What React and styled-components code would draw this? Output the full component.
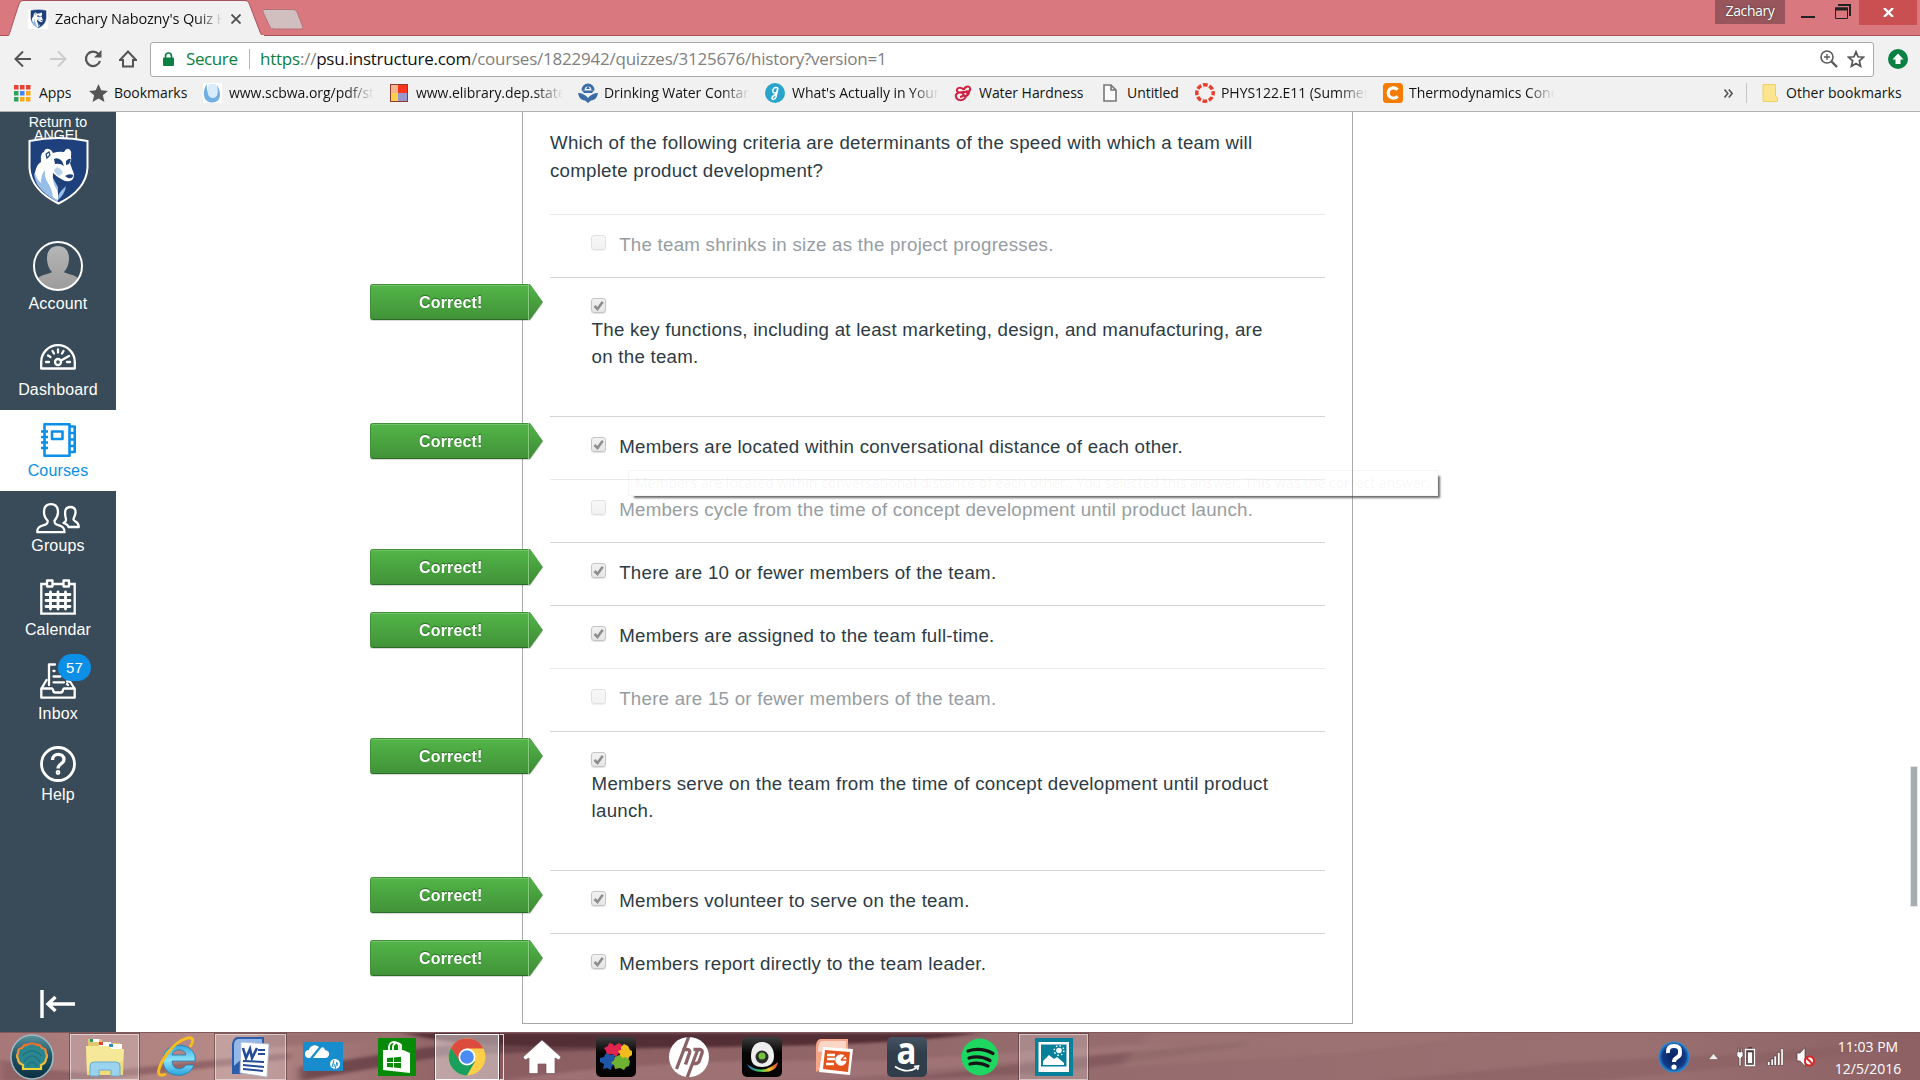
import React from "react";
import styled, { createGlobalStyle } from "styled-components";

const Global = createGlobalStyle`
  * { box-sizing: border-box; }
  html, body { margin: 0; padding: 0; overflow: hidden; background: #fff; }
  svg { display: block; flex: none; }
`;

const ui = `"Open Sans", "Noto Sans", sans-serif`;
const body = `"Liberation Sans", Arial, sans-serif`;

const Screen = styled.div`
  width: 1920px;
  height: 1080px;
  display: flex;
  flex-direction: column;
  overflow: hidden;
  font-family: ${body};
`;

/* ---------- title bar ---------- */
const TitleBar = styled.header`
  height: 36px;
  flex: none;
  display: flex;
  align-items: flex-start;
  background: #d9797f;
  box-shadow: inset 0 -1px 0 #a5525a;
`;
const Tab = styled.div`
  width: 256px;
  height: 36px;
  margin-left: 8px;
  position: relative;
  display: flex;
  align-items: center;
  padding: 1px 0 0 20px;
`;
const TabShape = styled.svg`
  position: absolute;
  left: 0;
  top: 0;
`;
const Favicon = styled.div`
  position: relative;
  width: 20px;
  height: 20px;
  background: #fff;
  display: flex;
  justify-content: center;
`;
const TabTitle = styled.div`
  position: relative;
  width: 168px;
  margin-left: 7px;
  font: 14.5px/22px ${ui};
  letter-spacing: -0.15px;
  white-space: nowrap;
  overflow: hidden;
  color: #111;
  mask-image: linear-gradient(90deg, #000 142px, transparent 168px);
`;
const TabClose = styled.svg`
  position: relative;
  margin-left: 8px;
`;
const NewTab = styled.svg`
  margin: 9px 0 0 -2px;
`;
const Spacer = styled.div`
  flex: 1;
`;
const Profile = styled.div`
  width: 70px;
  height: 24px;
  background: #98555b;
  color: #fff;
  font: 14px/22px ${ui};
  letter-spacing: -0.4px;
  text-align: center;
  text-shadow: 0 0 2px #333;
`;
const WinButtons = styled.div`
  display: flex;
  align-items: flex-start;
  padding: 3px 0 0 16px;
  gap: 20px;
`;
const CloseButton = styled.div`
  width: 58px;
  height: 25px;
  margin: -3px 3px 0 -12px;
  background: #c94f50;
  display: flex;
  align-items: center;
  justify-content: center;
`;

/* ---------- toolbar ---------- */
const Toolbar = styled.div`
  height: 45px;
  flex: none;
  display: flex;
  align-items: center;
  background: #f1f1f1;
  padding: 1px 12px 0 14px;
`;
const NavIcons = styled.div`
  width: 136px;
  display: flex;
  gap: 17px;
`;
const Omnibox = styled.div`
  flex: 1;
  height: 35px;
  display: flex;
  align-items: center;
  background: #fff;
  border: 1px solid #a9a9a9;
  border-radius: 3px;
  padding: 0 8px 0 12px;
  font: 17px/30px ${ui};
  letter-spacing: -0.23px;
`;
const Secure = styled.span`
  color: #0b8043;
  margin-left: 12px;
  width: 52px;
  letter-spacing: -0.4px;
`;
const Divider = styled.span`
  width: 1px;
  height: 20px;
  background: #b5b5b5;
  margin: 0 10px 0 11px;
`;
const Url = styled.span`
  flex: 1;
  color: #808080;
  white-space: nowrap;
  b { font-weight: 400; color: #111; }
  i { font-style: normal; color: #0b8043; }
`;
const OmniIcons = styled.div`
  display: flex;
  gap: 9px;
`;
const Update = styled.div`
  margin: 0 0 0 14px;
`;

/* ---------- bookmarks ---------- */
const Bookmarks = styled.nav`
  height: 31px;
  flex: none;
  display: flex;
  align-items: center;
  background: #f1f1f1;
  border-bottom: 1px solid #b3b3b3;
  padding: 0 18px 6px 14px;
  font: 14px/20px ${ui};
  letter-spacing: -0.05px;
  color: #141414;
`;
const Mark = styled.div`
  width: ${(p) => p.$w}px;
  display: flex;
  align-items: center;
  white-space: nowrap;
`;
const MarkIcon = styled.div`
  width: ${(p) => p.$w}px;
  height: 20px;
  flex: none;
  display: flex;
  align-items: center;
`;
const MarkText = styled.span`
  width: ${(p) => (p.$fade ? p.$fade + "px" : "auto")};
  overflow: hidden;
  ${(p) => p.$fade && `mask-image: linear-gradient(90deg, #000 ${p.$fade - 28}px, transparent ${p.$fade}px);`}
`;
const OtherText = styled.span`
  width: 116px;
  letter-spacing: 0.05px;
  white-space: nowrap;
`;
const MarkRule = styled.span`
  width: 1px;
  height: 20px;
  background: #c4c4c4;
  margin: 0 15px 0 13px;
`;

/* ---------- page ---------- */
const Page = styled.div`
  flex: 1;
  min-height: 0;
  display: flex;
  background: #fff;
`;
const Sidebar = styled.aside`
  width: 116px;
  flex: none;
  display: flex;
  flex-direction: column;
  background: #394b58;
  color: #fff;
`;
const NavItem = styled.div`
  height: ${(p) => p.$h}px;
  padding-top: ${(p) => p.$top}px;
  display: flex;
  flex-direction: column;
  align-items: center;
  justify-content: flex-start;
  gap: ${(p) => p.$gap}px;
  font-size: 16px;
  line-height: 18px;
  letter-spacing: 0.16px;
  background: ${(p) => (p.$active ? "#fff" : "transparent")};
  color: ${(p) => (p.$active ? "#0c8fe6" : "#fff")};
`;
const Angel = styled.div`
  height: 129px;
  padding-top: 4px;
  display: flex;
  flex-direction: column;
  align-items: center;
  font-size: 14.2px;
  line-height: 13px;
  text-align: center;
  svg { margin-top: -5px; }
`;
const InboxIcon = styled.div`
  position: relative;
`;
const Badge = styled.span`
  position: absolute;
  left: 18px;
  top: -9px;
  width: 33px;
  height: 27px;
  border-radius: 14px;
  background: #0c8fe6;
  color: #fff;
  font-size: 15px;
  line-height: 27px;
  text-align: center;
`;
const Collapse = styled.div`
  margin-top: auto;
  padding: 0 0 14px 38px;
`;
const Main = styled.main`
  flex: 1;
  display: flex;
  align-items: flex-start;
  padding: 0 2px 0 406px;
`;
const Card = styled.section`
  width: 831px;
  height: 912px;
  border: 1px solid #aaa;
  border-top: 0;
  padding: 17px 27px 0 27px;
  color: #2d3b45;
  font-size: 18.7px;
  letter-spacing: 0.25px;
`;
const Question = styled.p`
  margin: 0;
  height: 85px;
  line-height: 28px;
  white-space: nowrap;
`;
const Row = styled.div`
  position: relative;
  height: ${(p) => (p.$tall ? 139 : 63)}px;
  border-top: 1px solid ${(p) => (p.$dim ? "#ebebeb" : "#d5d5d5")};
  padding: 20px 0 0 41px;
  display: flex;
  flex-direction: ${(p) => (p.$tall ? "column" : "row")};
  align-items: flex-start;
  gap: ${(p) => (p.$tall ? 3 : 13)}px;
`;
const Check = styled.span`
  width: 15px;
  height: 15px;
  flex: none;
  border: 1px solid #c4c4c4;
  border-radius: 3px;
  background: linear-gradient(#f2f2f2, #e6e6e6);
  box-shadow: 0 1px 1px #e2e2e2;
  opacity: ${(p) => (p.$dim ? 0.5 : 1)};
`;
const Answer = styled.span`
  line-height: 27px;
  margin-top: ${(p) => (p.$tall ? 0 : -4)}px;
  margin-left: ${(p) => (p.$tall ? 0.6 : 0.2)}px;
  white-space: pre;
  color: ${(p) => (p.$dim ? "#969da2" : "#2d3b45")};
`;
const Tag = styled.div`
  position: absolute;
  left: -180px;
  top: 6px;
  width: 173px;
  height: 37px;
  display: flex;
  filter: drop-shadow(0 1px 0.5px rgba(0, 0, 0, 0.15));
`;
const TagBody = styled.div`
  width: 159px;
  height: 36px;
  border: 1px solid #43903a;
  border-right-color: #86cb7e;
  border-bottom-color: #2b6d27;
  border-radius: 3px 0 0 3px;
  background: linear-gradient(#52b548, #429338);
  box-shadow: inset 0 1px 0 #72c569;
  color: #fff;
  font-size: 16px;
  font-weight: 700;
  line-height: 35px;
  letter-spacing: 0.15px;
  padding-left: 48px;
  text-shadow: 0 -1px 1px #256b20;
`;
const Tip = styled.div`
  position: absolute;
  left: 78px;
  top: 53px;
  width: 810px;
  height: 26px;
  z-index: 2;
  border: 1px solid rgba(0, 0, 0, 0.035);
  box-shadow: 4px 4px 2px -2px rgba(70, 70, 70, 0.8);
  font: 14px/24px ${ui};
  letter-spacing: 0;
  color: rgba(0, 0, 0, 0.055);
  padding-left: 6px;
  white-space: nowrap;
`;
const Scrollbar = styled.div`
  width: 8px;
  height: 141px;
  margin: 654px 0 0 auto;
  background: #a6aeb3;
  border: 1px solid #e3e6e8;
`;

/* ---------- taskbar ---------- */
const Taskbar = styled.footer`
  height: 48px;
  flex: none;
  display: flex;
  align-items: center;
  position: relative;
  color: #fff;
  background: #946a6c;
  border-top: 1px solid #80595c;
`;
const Wallpaper = styled.svg`
  position: absolute;
  inset: 0;
`;
const Slot = styled.div`
  position: relative;
  width: ${(p) => p.$w}px;
  height: 47px;
  display: flex;
  align-items: center;
  justify-content: center;
  margin-right: ${(p) => p.$after || 0}px;
  ${(p) =>
    p.$open &&
    `border: 1px solid rgba(255,255,255,${p.$open === 2 ? 0.95 : 0.5});
     outline: 1px solid rgba(60,35,38,.45); outline-offset: 0;
     height: 46px;
     background: rgba(255,255,255,${p.$open === 2 ? 0.42 : 0.2});`}
`;
const StackEdge = styled.span`
  position: absolute;
  right: -6px;
  top: -1px;
  width: 5px;
  height: 46px;
  border: 1px solid rgba(255, 255, 255, 0.8);
  border-left-color: #4d3033;
`;
const Tray = styled.div`
  position: relative;
  margin-left: auto;
  display: flex;
  align-items: center;
  height: 47px;
`;
const TrayIcon = styled.div`
  width: ${(p) => p.$w}px;
`;
const Clock = styled.div`
  width: 101px;
  text-align: center;
  font: 14px/22px ${ui};
  padding: 3px 3px 0 0;
`;

const Shield = ({ w, h }) => (
  <svg width={w} height={h} viewBox="0 0 61 68" preserveAspectRatio="none">
    <path d="M1.500 4Q30-2 59.500 4V31Q58 53 30.500 66.500Q3 53 1.500 31Z" fill="#1e407c" stroke="#fff" strokeWidth="2" />
    <path d="M12 27L6 37q1 8 5 13 7 9 19 15V50L20 32Z" fill="#96bee6" />
    <path d="M16 15q1-4 5-3 3 1 4 4 6-2 11-1 2-4 5-3 3 2 2 7 1 4-1 7 2 6 4 11 0 6-4 7-4 1-7-1-5-2-10-7-1 9 3 15 3 5 2 12-3-1-5-3-1-8-5-14-4-6-3-13-4 4-4 13-4-3-6-10 1-8 6-11-1-5 1-9Z" fill="#fff" />
    <path d="M38 49q-1 8-8 14 0-6 3-9Z" fill="#96bee6" />
    <path d="M26 22q4-2 8 2l2 5q-4-3-9-2Z M38 24q3-3 5-2l-2 5-3 1Z M37 39q4-3 8-1 0 4-5 3Z" fill="#1e407c" />
    <path d="M29 30q5 2 6 6l-4 3q-4-2-5-6Z" fill="#b9d3ee" />
    <path d="M29 43q5 4 10 3M18 17l3-2 1 3-3 3Z" fill="none" stroke="#1e407c" strokeWidth="1.200" />
  </svg>
);

const line = { fill: "none", stroke: "#fff", strokeWidth: 2.3, strokeLinecap: "round", strokeLinejoin: "round" };

const Avatar = () => (
  <svg width="50" height="50" viewBox="0 0 50 50">
    <defs>
      <clipPath id="avatarClip"><circle cx="25" cy="25" r="24" /></clipPath>
      <linearGradient id="avatarFill" x2="0" y2="1"><stop stopColor="#b5b5b5" /><stop offset="1" stopColor="#9a9a9a" /></linearGradient>
    </defs>
    <g clipPath="url(#avatarClip)" fill="url(#avatarFill)">
      <path d="M25 5c7 0 11 5 11 12 0 6-2 11-5 14 2 2 12 2 17 9v12H2V40c5-7 15-7 17-9-3-3-5-8-5-14C14 10 18 5 25 5Z" />
    </g>
    <circle cx="25" cy="25" r="24" fill="none" stroke="#fff" strokeWidth="2" />
  </svg>
);
const Dashboard = () => (
  <svg width="36" height="26" viewBox="0 0 36 26" {...line}>
    <path d="M1.200 24.500V18a16.800 16.800 0 0 1 33.600 0v6.500Z" />
    <circle cx="18" cy="18" r="3" />
    <path d="M21 16.500l8-4.500M6 18h3M27 18h3M8 11.500l2.500 1.500M12.500 7l1.500 2.500M18 5.500V8.500M23.500 7L22 9.500" />
  </svg>
);
const Courses = () => (
  <svg width="36" height="34" viewBox="0 0 36 34" fill="none" stroke="#0c8fe6" strokeWidth="2.600">
    <path d="M4.500 1.300H29.500V32.700H4.500ZM29.500 3.500H34.700V29H29.500M29.500 10H35M29.500 16.500H35M29.500 23H35M12 8.500H22.500V16H12ZM1 8.500H8M1 14H8M1 19.500H8M1 25H8" strokeLinejoin="round" />
  </svg>
);
const Groups = () => (
  <svg width="44" height="31" viewBox="0 0 44 31" {...line}>
    <path d="M15 1.200c4.500 0 7 3 7 8 0 4-1.500 6-3.500 8.500 0 3 1 3.500 4 4.500 4 1.300 6 2.500 6 7H1.200c0-4.500 2-5.700 6.500-7 3-1 4-1.500 4-4.500C9.500 15.500 8 13.500 8 9.200c0-5 2.500-8 7-8Z" />
    <path d="M29.500 14c-1-5.500-.5-10 5-10s5.500 5 4.500 8c-.5 2-1.500 2.500-1.500 4.500 0 2 5.300 1.500 5.300 7.500H32.500c-.5-2.500-3.500-3.500-5-4 3-1.500 3-3 2-6Z" />
  </svg>
);
const Calendar = () => (
  <svg width="36" height="36" viewBox="0 0 36 36" {...line}>
    <path d="M6.500 5H1.300V34.700H34.700V5H29.500M13 5H23" strokeLinejoin="miter" />
    <path d="M7 1.500h5.500v6H7ZM23.500 1.500H29v6h-5.500Z" />
    <path d="M10.500 13V30M18 13V30M25.500 13V30M6 15.500H30M6 21.500H30M6 27.500H30" strokeWidth="2.800" />
  </svg>
);
const Inbox = () => (
  <svg width="36" height="36" viewBox="0 0 36 36" {...line}>
    <path d="M1.300 25.500H12c1.500 0 .5 4 3 4h6c2.500 0 1.500-4 3-4H34.700v9.200H1.300ZM1.500 25.500L6.500 17M34.500 25.500L30 18.500H27M9 22V1.500H15M13.500 8h1M13.500 13.500h7M13.500 19.300H24M27 21l1 1" />
  </svg>
);
const Help = () => (
  <svg width="36" height="36" viewBox="0 0 36 36" {...line} strokeWidth="2.800">
    <circle cx="18" cy="18" r="16.500" />
    <path d="M12.500 14c0-7.500 11.500-7.500 11.500-.5 0 4.500-6 4-6 9" strokeLinecap="butt" strokeWidth="3.300" />
    <circle cx="18" cy="26.500" r="1" />
  </svg>
);

const TAB_WORDS = "Zachary Nabozny's Quiz H";

const marks = [
  { w: 75, iw: 25, t: "Apps", icon: (
    <svg width="17" height="17" viewBox="0 0 17 17">
      {["#ea4335", "#ea4335", "#ea4335", "#34a060", "#4285f4", "#f9ab1b", "#34a060", "#f9ab1b", "#f9ab1b"].map((c, i) => (
        <rect key={i} x={(i % 3) * 6} y={Math.floor(i / 3) * 6} width="4.500" height="4.500" fill={c} />
      ))}
    </svg>) },
  { w: 114, iw: 25, t: "Bookmarks", icon: (
    <svg width="19" height="18" viewBox="0 0 20 19"><path fill="#555" d="M10 0l2.900 6.700 7.100.6-5.400 4.700 1.700 7L10 15.200 3.700 19l1.700-7L0 7.300l7.100-.6Z" /></svg>) },
  { w: 187, iw: 26, fade: 145, t: "www.scbwa.org/pdf/store", icon: (
    <svg width="19" height="20" viewBox="0 0 19 20"><rect width="19" height="20" fill="#fff" /><path d="M4 1C0 6 0 14 3 17c4 4 11 3 13-1 2-4 1-9-2-14 1 8 0 10-4 10S3 8 4 1Z" fill="#72afe2" /><path d="M6 1c-3 8-1 14 4 14s6-7 3-14Z" fill="#d9ecfb" /></svg>) },
  { w: 188, iw: 26, fade: 147, t: "www.elibrary.dep.state.pa", icon: (
    <svg width="18" height="18" viewBox="0 0 18 18"><rect width="18" height="18" fill="#8d3a35" /><rect x="1" y="1" width="7" height="9" fill="#f8b48a" /><rect x="8" y="1" width="9" height="8" fill="#f9351d" /><rect x="1" y="9" width="7" height="8" fill="#fbd04a" /><rect x="8" y="9" width="9" height="8" fill="#9a97cb" /></svg>) },
  { w: 187, iw: 26, fade: 146, t: "Drinking Water Contaminants", icon: (
    <svg width="20" height="20" viewBox="0 0 20 20" fill="none"><path d="M5 7.500a5 5.500 0 0 1 10 0" stroke="#3a6ca5" strokeWidth="3" /><path d="M10 3l2 3H8Z M4 7.500h12l-2 2.500H6Z M0 10c4 0 8 2 10 5 2-3 6-5 10-5-1 5-3 7-7 7.500L10 20l-3-2.500C3 17 1 15 0 10Z" fill="#3a6ca5" /></svg>) },
  { w: 189, iw: 27, fade: 147, t: "What's Actually in Your", icon: (
    <svg width="20" height="20" viewBox="0 0 20 20"><circle cx="10" cy="10" r="10" fill="#29a5cc" /><path d="M13 5c-4-2-6 2-5 4s4 1 4-1l1-3-2 9c-1 3-4 3-4 1s3-3 5-4" fill="none" stroke="#fff" strokeWidth="1.500" /></svg>) },
  { w: 149, iw: 25, t: "Water Hardness", icon: (
    <svg width="18" height="18" viewBox="0 0 18 18" fill="none" stroke="#cf2244" strokeWidth="2"><path d="M10 6C7 2 2 4 3 7c1 2 5 2 6 1-5 0-8 2-7 5 1 4 7 4 9 1s4-5 1-6-4 4-1 4 5-3 4-6M10 6c0-3 5-5 6-2s-2 4-4 3M6 13c2 0 3-1 4-3" /></svg>) },
  { w: 92, iw: 24, t: "Untitled", icon: (
    <svg width="14" height="18" viewBox="0 0 14 18" fill="#fafafa" stroke="#777" strokeWidth="1.600"><path d="M1 1h7l5 5v11H1ZM8 1v5h5" /></svg>) },
  { w: 188, iw: 26, fade: 146, t: "PHYS122.E11 (Summer)", icon: (
    <svg width="20" height="20" viewBox="0 0 20 20" fill="none" stroke="#e8402f" strokeWidth="3.500"><circle cx="10" cy="10" r="8.200" strokeDasharray="4.700 1.740" strokeDashoffset="2.300" /></svg>) },
  { w: 175, iw: 26, fade: 146, t: "Thermodynamics Concepts", icon: (
    <svg width="20" height="20" viewBox="0 0 20 20"><rect width="20" height="20" rx="3.500" fill="#f57c00" /><path d="M14.500 6.800A5.200 5.200 0 1 0 14.500 13.200" fill="none" stroke="#fff" strokeWidth="3.200" /></svg>) },
];

const answers = [
  { t: "The team shrinks in size as the project progresses.", dim: true },
  { t: "The key functions, including at least marketing, design, and manufacturing, are\non the team.", tall: true },
  { t: "Members are located within conversational distance of each other.", tip: true },
  { t: "Members cycle from the time of concept development until product launch.", dim: true },
  { t: "There are 10 or fewer members of the team." },
  { t: "Members are assigned to the team full-time." },
  { t: "There are 15 or fewer members of the team.", dim: true },
  { t: "Members serve on the team from the time of concept development until product\nlaunch.", tall: true },
  { t: "Members volunteer to serve on the team." },
  { t: "Members report directly to the team leader." },
];

const AnswerRow = ({ a }) => (
  <Row $tall={a.tall} $dim={a.dim}>
    {!a.dim && (
      <Tag>
        <TagBody>Correct!</TagBody>
        <svg width="14" height="36" viewBox="0 0 14 37" preserveAspectRatio="none">
          <defs><linearGradient id="arrowFill" x2="0" y2="1"><stop stopColor="#52b548" /><stop offset="1" stopColor="#3d8a34" /></linearGradient></defs>
          <path d="M0 0.500H1L13.500 18.500L1 36.500H0Z" fill="url(#arrowFill)" stroke="#43903a" strokeWidth=".7" />
        </svg>
      </Tag>
    )}
    <Check $dim={a.dim}>
      {!a.dim && (
        <svg width="13" height="13" viewBox="0 0 13 13"><path d="M2.500 7l3 3L10.800 2.800" fill="none" stroke="#8e8e8e" strokeWidth="2.600" /></svg>
      )}
    </Check>
    <Answer $tall={a.tall} $dim={a.dim}>{a.t}</Answer>
    {a.tip && <Tip>Members are located within conversational distance of each other.. You selected this answer. This was the correct answer.</Tip>}
  </Row>
);

const Shell = () => (
  <svg width="44" height="46" viewBox="0 0 44 46">
    <defs><linearGradient id="orb" x2="0" y2="1"><stop stopColor="#5c929b" /><stop offset=".5" stopColor="#1d5266" /><stop offset="1" stopColor="#0c2f40" /></linearGradient>
      <linearGradient id="shellLine" x2="0" y2="1"><stop stopColor="#f26b2c" /><stop offset="1" stopColor="#f2d53a" /></linearGradient></defs>
    <ellipse cx="22" cy="23" rx="21" ry="22" fill="url(#orb)" stroke="#9dbcc4" strokeWidth="1.500" />
    <path d="M13 35v-4q-5-2-5-6-2-3 0-6 0-5 4-5 2-4 5-3 5-3 10 0 3-1 5 3 4 0 4 5 2 3 0 6 0 4-5 6v4Z" fill="#2a8790" stroke="url(#shellLine)" strokeWidth="2.200" />
    <path d="M14 28q8-12 16 0M12 22q10-10 20 0M17 32q5-8 10 0" fill="none" stroke="#1f7482" strokeWidth="1.600" />
  </svg>
);
const Explorer = () => (
  <svg width="40" height="40" viewBox="0 0 40 40">
    <path d="M3 2h13l2 4h17v6H3Z" fill="#e3c871" /><path d="M6 2h8v3H6Z" fill="#fff" /><path d="M5 2h3v3H5Z" fill="#2d9b5a" />
    <path d="M14 5h12v4H14Z" fill="#fff" /><path d="M14 5h4v3h-4Z" fill="#e03c31" />
    <path d="M24 7h13v5H24Z" fill="#fff" /><path d="M24 7h4v3h-4Z" fill="#3187c9" />
    <path d="M1 9h23l2 3h13l-1 26H2Z" fill="#f0dc7b" /><path d="M1 9h23l2 3h13l-1 12L2 34Z" fill="#f8eda6" opacity=".7" />
    <path d="M5 39V29q0-4 4-4h22q4 0 4 4v10h-9v-6H14v6Z" fill="#9bd3ef" stroke="#6aaacb" />
  </svg>
);
const IE = () => (
  <svg width="42" height="42" viewBox="0 0 42 42">
    <defs><linearGradient id="ie" x2="0" y2="1"><stop stopColor="#37a9e0" /><stop offset=".5" stopColor="#8de3fa" /><stop offset="1" stopColor="#2aa3dc" /></linearGradient></defs>
    <path d="M39 25H16c0 9 10 10 14 4h8C33 44 7 43 7 24S35 5 39 20ZM30 19c-1-7-13-7-14 0Z" fill="url(#ie)" stroke="#1d7cb5" strokeWidth=".8" fillRule="evenodd" />
    <path d="M34 11C44-4 24 0 11 18 1 32-1 43 10 38" fill="none" stroke="#f6bd1d" strokeWidth="3" />
  </svg>
);
const Word = () => (
  <svg width="40" height="42" viewBox="0 0 40 42">
    <path d="M6 1H33V38H1V8Q2 2 6 1Z" fill="#2c5dac" /><path d="M7 3H31V15Q15 17 3 30V9Q3 4 7 3Z" fill="#93b7e6" />
    <path d="M10 6l28 2-2 33-27-4Z" fill="#fff" stroke="#aab9d2" strokeWidth=".8" />
    <path d="M12 25l21 1M12 29l21 2M12 33l20 2M27 14h7M27 18h7" stroke="#254b96" strokeWidth="2" />
    <path d="M12 12l3 10 4-9 2 9 5-10" fill="none" stroke="#254b96" strokeWidth="2.600" />
  </svg>
);
const HpCloud = () => (
  <svg width="40" height="29" viewBox="0 0 40 29"><rect width="40" height="29" fill="#178dce" />
    <path d="M6 16a4 4 0 0 1 0-8 6 6 0 0 1 10-3l-9 11Z M10 16L18 6q3-2 4 2 5 1 4 5-1 3-4 3Z" fill="#fff" />
    <circle cx="32" cy="22" r="5" fill="#fff" /><path d="M31 18l-2 7M30 22q2-1 1 3M34 20l-2 7M33 21q3-1 1 3" stroke="#178dce" fill="none" /></svg>
);
const Store = () => (
  <svg width="38" height="38" viewBox="0 0 38 38"><rect width="38" height="38" fill="#078a07" />
    <path d="M5 12l27 3v20L5 32Z M5 12h20l7 3Z" fill="#fff" /><path d="M11 14V9a5 5 0 0 1 10 0v6M15 12V8q3-6 8-1v5" fill="none" stroke="#fff" strokeWidth="1.800" />
    <path d="M9 20l6-.5V24H9ZM16 19.400l7-.6V24h-7ZM9 25h6v4.500L9 29ZM16 25h7v5.200l-7-.6Z" fill="#078a07" /></svg>
);
const Chrome = () => (
  <svg width="38" height="38" viewBox="0 0 38 38">
    <circle cx="19" cy="19" r="18.500" fill="#fdce47" />
    <path d="M3 10A18.500 18.500 0 0 1 35.500 10.500H19L11 24Z" fill="#dd4b3e" />
    <path d="M3 10A18.500 18.500 0 0 0 19 37.500L27 23.500 11.500 23Z" fill="#1aa05d" />
    <circle cx="19" cy="19" r="8.500" fill="#fff" /><circle cx="19" cy="19" r="6.800" fill="#4b8bf4" />
  </svg>
);
const Home = () => (
  <svg width="40" height="36" viewBox="0 0 40 36"><path d="M20 1L39 18l-2 3-4-2v15.500H24V25h-8v9.500H7V19l-4 2-2-3Z" fill="#fff" stroke="#76595b" strokeWidth=".7" /></svg>
);
const AppBox = ({ children, top = "#3d3d3d", bottom = "#050505" }) => (
  <svg width="40" height="40" viewBox="0 0 40 40">
    <defs><linearGradient id={"box" + top.slice(1)} x2="0" y2="1"><stop stopColor={top} /><stop offset=".4" stopColor={bottom} /></linearGradient></defs>
    <rect width="40" height="40" rx="5" fill={`url(#box${top.slice(1)})`} />
    {children}
  </svg>
);
const Puzzle = () => (
  <AppBox>
    <path d="M8 11l4-2 1-3 4 1 1 2 5-3 3 2-1 4 3 3-6 2-2 3-4-3-5 1-1-4Z" fill="#e0264f" />
    <path d="M25 10l3-3 4 2 2 4 2 1v4l-3 2-1 4-5-2-4-1 1-4-2-3 3-1Z" fill="#f3bc1e" />
    <path d="M4 21l4-1 2-4 4 2 4-1 1 4-2 3 3 3-4 2-1 4-4-2-4 1 1-5-4-2Z" fill="#1f56a8" />
    <path d="M19 20l4-2 4 3 3-1 4 4-1 5-3 1-2 3-4-2-5 1-1-4-3-2 3-3Z" fill="#6fb131" />
  </AppBox>
);
const HP = () => (
  <svg width="40" height="40" viewBox="0 0 40 40"><circle cx="20" cy="20" r="20" fill="#fff" />
    <path d="M20 -1L7.500 32M18 41L29 12" stroke="#8b6265" strokeWidth="3.200" />
    <path d="M13.500 12.500h4.500q3.500 0 2.500 3.500l-4 11.500M24.500 12.500h6q3.500 0 2.500 3.500l-2.500 7.500q-1 3-4 3h-3" fill="none" stroke="#8b6265" strokeWidth="3.400" /></svg>
);
const Camera = () => (
  <AppBox>
    <defs><linearGradient id="rainbow"><stop stopColor="#1f6bd0" /><stop offset=".45" stopColor="#45cf50" /><stop offset=".7" stopColor="#efc52c" /><stop offset="1" stopColor="#e8402f" /></linearGradient></defs>
    <path d="M5 27q15 12 31-2-1 10-15 10Q8 35 5 27Z" fill="url(#rainbow)" />
    <path d="M20 5c8 0 12 7 12 14s-4 11-12 11S9 26 9 19 12 5 20 5Z" fill="#eee" /><circle cx="20" cy="20" r="6.500" fill="#292d2a" /><circle cx="20" cy="19" r="3.500" fill="#75c23c" />
  </AppBox>
);
const PowerPoint = () => (
  <svg width="38" height="38" viewBox="0 0 38 38"><path d="M5 1h28v18L1 34V9Q1 2 5 1Z" fill="#f6a588" /><path d="M7 3h24v8L3 14Q3 4 7 3Z" fill="#fcd6c6" />
    <path d="M8 9l30 2-3 26-31-3Z" fill="#fff" /><path d="M10 12l25 2-2 20-25-3Z" fill="#e4521b" />
    <path d="M12 17h8M12 21h8M11 26h8" stroke="#fff" strokeWidth="2.300" /><circle cx="26" cy="22" r="5.700" fill="#fff" /><path d="M26 22l5-5M26 22h6" stroke="#e4521b" strokeWidth="1.500" /></svg>
);
const Amazon = () => (
  <AppBox top="#465362" bottom="#303d4b">
    <text x="19.500" y="27" textAnchor="middle" fill="#fff" fontFamily="Open Sans, sans-serif" fontWeight="700" fontSize="37" textLength="20" lengthAdjust="spacingAndGlyphs">a</text>
    <path d="M8 29.500q12 8 22 1M27 29.500l4.500-.5-1 4" fill="none" stroke="#fff" strokeWidth="1.600" />
  </AppBox>
);
const Spotify = () => (
  <svg width="38" height="38" viewBox="0 0 38 38"><circle cx="19" cy="19" r="18.500" fill="#1ed760" />
    <path d="M7 13q13-4 25 2.500M8 20q11-3 21 2.500M9 26q9-2.500 18 2" fill="none" stroke="#151515" strokeLinecap="round" strokeWidth="3.200" /></svg>
);
const Photos = () => (
  <svg width="38" height="38" viewBox="0 0 38 38"><rect width="38" height="38" fill="#067f99" /><path d="M3.500 4H34v30H3.500Z" fill="#fff" /><path d="M6 6.500H31.500V28.500H6Z" fill="#067f99" />
    <path d="M8 27v-4l6-6 5 4 3-2 7 6v2Z" fill="#fff" /><circle cx="24" cy="12.500" r="2.800" fill="#fff" /><circle cx="24" cy="12.500" r="4.800" fill="none" stroke="#fff" strokeWidth="1.500" strokeDasharray="1.500 2.270" /></svg>
);

export default function App() {
  return (
    <Screen>
      <Global />
      <TitleBar>
        <Tab>
          <TabShape width="256" height="36" viewBox="0 0 256 36">
            <path d="M0 36C2 34 2 31 11 4Q12 .5 15 .5H237Q240 .5 241 3L252 32Q253 35.500 256 36Z" fill="#f1f1f1" stroke="#a5525a" />
            <path d="M1 36H256" stroke="#f1f1f1" strokeWidth="2" />
          </TabShape>
          <Favicon><Shield w={17} h={20} /></Favicon>
          <TabTitle>{TAB_WORDS}</TabTitle>
          <TabClose width="10" height="10" viewBox="0 0 10 10" stroke="#4d4d4d" strokeWidth="1.800"><path d="M.5.5l9 9M9.500.5l-9 9" /></TabClose>
        </Tab>
        <NewTab width="42" height="21" viewBox="0 0 42 21"><path d="M2 .5H31Q34 .5 35 3L40.500 17Q41.500 20 38 20H12Q9 20 8 18L1 3Q0 .5 2 .5Z" fill="#d1bfc0" stroke="#b5747a" /></NewTab>
        <Spacer />
        <Profile>Zachary</Profile>
        <WinButtons>
          <svg width="14" height="16" viewBox="0 0 14 16"><path d="M0 14H14" stroke="#222" strokeWidth="2" /></svg>
          <svg width="16" height="16" viewBox="0 0 16 16" fill="none" stroke="#222"><path d="M3 2H15V13" strokeWidth="2" /><path d="M.5 5H12.500V15.500H.5Z" /><path d="M0 6H13" strokeWidth="3" /></svg>
          <CloseButton><svg width="11" height="9" viewBox="0 0 11 9" stroke="#fff" strokeWidth="2.400"><path d="M1 0l9 9M10 0L1 9" /></svg></CloseButton>
        </WinButtons>
      </TitleBar>

      <Toolbar>
        <NavIcons>
          <svg width="18" height="18" viewBox="0 0 18 18" fill="none" stroke="#555" strokeWidth="2"><path d="M17 9H2M9 1.500L1.500 9 9 16.500" /></svg>
          <svg width="18" height="18" viewBox="0 0 18 18" fill="none" stroke="#ccc" strokeWidth="2"><path d="M1 9H16M9 1.500L16.500 9 9 16.500" /></svg>
          <svg width="18" height="18" viewBox="0 0 18 18" fill="none" stroke="#555" strokeWidth="2.200"><path d="M14.500 4A7.200 7.200 0 1 0 16 11" /><path d="M17.500 0V7.500H10Z" fill="#555" stroke="none" /></svg>
          <svg width="18" height="18" viewBox="0 0 18 18" fill="none" stroke="#555" strokeWidth="2"><path d="M1 10L9 1.500 17 10H14V16.500H4V10Z" /></svg>
        </NavIcons>
        <Omnibox>
          <svg width="11" height="14" viewBox="0 0 11 14"><path d="M2.500 6V4a3 3 0 0 1 6 0v2" fill="none" stroke="#0b8043" strokeWidth="1.700" /><rect y="5.500" width="11" height="8.500" rx="1" fill="#0b8043" /></svg>
          <Secure>Secure</Secure>
          <Divider />
          <Url><i>https</i>://<b>psu.instructure.com</b>/courses/1822942/quizzes/3125676/history?version=1</Url>
          <OmniIcons>
            <svg width="18" height="18" viewBox="0 0 18 18" fill="none" stroke="#5a5a5a" strokeWidth="1.600"><circle cx="7" cy="7" r="6" /><path d="M11.500 11.500l5.500 5.500" strokeWidth="2.400" /><path d="M4 7h6M7 4v6" strokeWidth="1.300" /></svg>
            <svg width="18" height="18" viewBox="0 0 20 20" fill="none" stroke="#555" strokeWidth="1.900"><path d="M10 2l2.300 5.500 6 .5-4.600 4 1.400 6L10 15l-5.100 3 1.400-6L1.700 8l6-.5Z" /></svg>
          </OmniIcons>
        </Omnibox>
        <Update><svg width="20" height="20" viewBox="0 0 20 20"><circle cx="10" cy="10" r="10" fill="#0b8043" /><path d="M10 4.500l5.500 6H12.500V15h-5v-4.500H4.500Z" fill="#fff" /></svg></Update>
      </Toolbar>

      <Bookmarks>
        {marks.map((m) => (
          <Mark key={m.t} $w={m.w}>
            <MarkIcon $w={m.iw}>{m.icon}</MarkIcon>
            <MarkText $fade={m.fade}>{m.t}</MarkText>
          </Mark>
        ))}
        <Spacer />
        <svg width="9" height="9" viewBox="0 0 9 9" fill="none" stroke="#555" strokeWidth="1.600"><path d="M.5.500l3.300 4-3.300 4M4.800.500l3.300 4-3.300 4" /></svg>
        <MarkRule />
        <MarkIcon $w={24}><svg width="16" height="18" viewBox="0 0 16 18"><path d="M1 .5H13.500V12L15.500 13.500V17.500H1Z" fill="#fde590" stroke="#f2cf62" /></svg></MarkIcon>
        <OtherText>Other bookmarks</OtherText>
      </Bookmarks>

      <Page>
        <Sidebar>
          <Angel>Return to<br />ANGEL<Shield w={61} h={68} /></Angel>
          <NavItem $h={95} $gap={4}><Avatar />Account</NavItem>
          <NavItem $h={74} $top={8} $gap={11}><Dashboard />Dashboard</NavItem>
          <NavItem $h={81} $top={13} $gap={5} $active><Courses />Courses</NavItem>
          <NavItem $h={80} $top={12} $gap={3}><Groups />Groups</NavItem>
          <NavItem $h={84} $top={8} $gap={6}><Calendar />Calendar</NavItem>
          <NavItem $h={84} $top={8} $gap={6}><InboxIcon><Inbox /><Badge>57</Badge></InboxIcon>Inbox</NavItem>
          <NavItem $h={70} $top={7} $gap={4}><Help />Help</NavItem>
          <Collapse><svg width="38" height="28" viewBox="0 0 38 28" fill="none" stroke="#fff" strokeWidth="3.400"><path d="M4 0V28M10 14H37M17.500 7L10 14l7.500 7" /></svg></Collapse>
        </Sidebar>
        <Main>
          <Card>
            <Question>Which of the following criteria are determinants of the speed with which a team will<br />complete product development?</Question>
            {answers.map((a) => <AnswerRow key={a.t} a={a} />)}
          </Card>
          <Scrollbar />
        </Main>
      </Page>

      <Taskbar>
        <Wallpaper width="1920" height="48" viewBox="0 0 1920 48" preserveAspectRatio="none">
          <defs>
            <linearGradient id="wall"><stop stopColor="#a87778" /><stop offset=".12" stopColor="#b58a87" /><stop offset=".25" stopColor="#8a5c60" /><stop offset=".5" stopColor="#946a6c" /><stop offset=".85" stopColor="#9a7071" /><stop offset="1" stopColor="#8d6164" /></linearGradient>
            <filter id="soft" x="-10%" y="-50%" width="120%" height="200%"><feGaussianBlur stdDeviation="4 1.500" /></filter>
          </defs>
          <rect width="1920" height="48" fill="url(#wall)" />
          <g filter="url(#soft)">
            <path d="M0 26L40 36 90 40 180 30 290 20 290 26 180 38 80 48H0Z" fill="#8a5d60" opacity=".8" />
            <path d="M270 0H430L380 8 300 12 230 18Z" fill="#9b6f70" />
            <path d="M300 48L450 22 700 14 900 8 960 0H415L500 8 430 14 300 34Z" fill="#5f3b40" opacity=".75" />
            <path d="M400 0H980Q900 12 720 14T450 9Z" fill="#532f34" />
            <path d="M500 48Q650 24 880 28L1130 12 1180 14 1000 30 820 48Z" fill="#a27779" opacity=".8" />
            <path d="M880 48L1100 22 1250 8 1240 14 1050 40Z" fill="#7e5659" opacity=".7" />
            <path d="M1150 0H1500L1350 20 1120 34Z" fill="#9f7475" opacity=".6" />
            <path d="M1380 48L1560 30 1760 20 1900 8 1880 18 1600 48Z" fill="#845a5d" opacity=".45" />
          </g>
        </Wallpaper>
        <Slot $w={64} $after={6}><Shell /></Slot>
        <Slot $w={69} $after={2} $open={1}><Explorer /></Slot>
        <Slot $w={72} $after={2}><IE /></Slot>
        <Slot $w={71} $after={2} $open={1}><Word /></Slot>
        <Slot $w={70}><HpCloud /></Slot>
        <Slot $w={77}><Store /></Slot>
        <Slot $w={64} $after={6} $open={2}><Chrome /><StackEdge /></Slot>
        <Slot $w={74}><Home /></Slot>
        <Slot $w={73}><Puzzle /></Slot>
        <Slot $w={73}><HP /></Slot>
        <Slot $w={73}><Camera /></Slot>
        <Slot $w={72}><PowerPoint /></Slot>
        <Slot $w={73}><Amazon /></Slot>
        <Slot $w={73} $after={3}><Spotify /></Slot>
        <Slot $w={69} $open={1}><Photos /></Slot>
        <Tray>
          <TrayIcon $w={50}>
            <svg width="32" height="32" viewBox="0 0 32 32"><defs><radialGradient id="help"><stop stopColor="#0c1f5c" /><stop offset=".75" stopColor="#123a86" /><stop offset="1" stopColor="#2a93dc" /></radialGradient></defs><circle cx="16" cy="16" r="15.500" fill="url(#help)" /><path d="M10 12Q9 5 16 5t6 7q0 3-3 4.500T16 21" fill="none" stroke="#fff" strokeWidth="4" /><circle cx="16" cy="26" r="2.600" fill="#fff" /></svg>
          </TrayIcon>
          <TrayIcon $w={29}><svg width="11" height="7" viewBox="0 0 11 7"><path d="M5.500 .5L10.500 6.500H.5Z" fill="#eee" stroke="#604346" strokeWidth=".5" /></svg></TrayIcon>
          <TrayIcon $w={30}>
            <svg width="19" height="20" viewBox="0 0 19 20" fill="none" stroke="#4c3336" strokeWidth=".6"><path d="M1 1v4H0v4l2 2v8h2v-8l2-2V5H5V1H4v4H2V1Z" fill="#fff" /><path d="M8 2h3V.5h4V2h3V19H8Z" fill="#4c3336" /><path d="M8.500 2.500h9V18.500h-9Z" stroke="#fff" strokeWidth="1.400" /><path d="M10.500 5h5v11.500h-5Z" fill="#fff" /></svg>
          </TrayIcon>
          <TrayIcon $w={29}>
            <svg width="17" height="18" viewBox="0 0 17 18" fill="#fff" stroke="#4c3336" strokeWidth=".6"><path d="M.5 13.500h2.500v4H.500ZM4 11h2.500v6.500H4ZM7 8h2.500v9.500H7ZM10.500 4.500H13v13h-2.500ZM13.800.500h2.500v17h-2.500Z" /></svg>
          </TrayIcon>
          <TrayIcon $w={23}>
            <svg width="20" height="20" viewBox="0 0 20 20"><path d="M1 6h3l5-5.500v19L4 14H1Z" fill="#fff" stroke="#4c3336" strokeWidth=".7" /><circle cx="13.500" cy="14" r="4.500" fill="#fff" stroke="#dc2323" strokeWidth="2" /><path d="M10.500 11l6 6" stroke="#dc2323" strokeWidth="2" /></svg>
          </TrayIcon>
          <Clock>11:03 PM<br />12/5/2016</Clock>
        </Tray>
      </Taskbar>
    </Screen>
  );
}
